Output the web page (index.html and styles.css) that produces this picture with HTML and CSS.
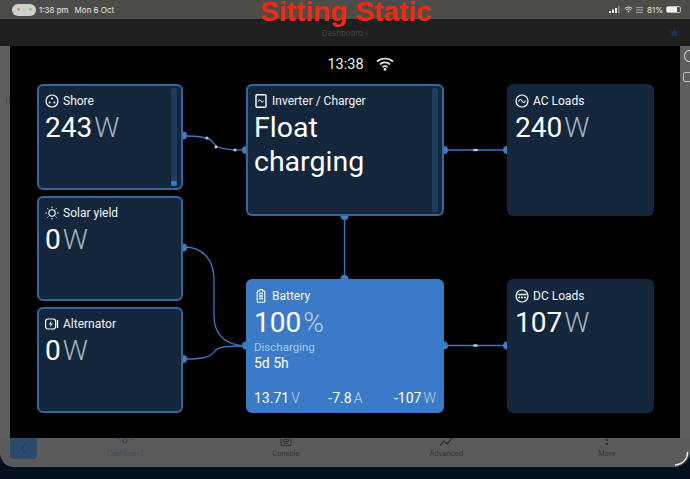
FILE: index.html
```html
<!DOCTYPE html>
<html lang="en">
<head>
<meta charset="utf-8">
<title>Dashboard</title>
<link rel="stylesheet" href="styles.css">
</head>
<body>
<div class="tablet">
  <header class="status">
    <div class="status-left">
      <span class="lights"><i class="l-red"></i><i class="l-yellow"></i><i class="l-green"></i></span>
      <span>1:38 pm</span><span class="date">Mon 6 Oct</span>
    </div>
    <div class="status-right">
      <svg class="st-signal" viewBox="0 0 11 7"><path d="M0 5h2v2H0zM3 3.500h2V7H3zM6 2h2v5H6z" fill="#e8e8e8"/><path d="M9 0h1.500v7H9z" fill="#8b8b88"/></svg>
      <svg class="st-wifi" viewBox="0 0 12 9"><path d="M1 3.200C4 .6 8 .6 11 3.200M2.800 5C4.800 3.400 7.200 3.400 9.200 5" fill="none" stroke="#e8e8e8" stroke-width="1.300"/><path d="M6 8.500 4.300 6.600C5.300 5.900 6.700 5.900 7.700 6.600z" fill="#e8e8e8"/></svg>
      <svg class="st-list" viewBox="0 0 9 7"><path d="M0 .5h9M0 3.500h9M0 6.500h9" stroke="#bdbdb9" stroke-width="1"/></svg>
      <span>81%</span>
      <span class="st-batt"><i></i></span>
    </div>
  </header>
  <nav class="crumb">
    <span class="crumb-text">Dashboard ›</span>
    <svg class="star" viewBox="0 0 24 24"><path d="M12 2l3 7 7.500.6-5.700 4.900 1.800 7.500L12 18l-6.600 4 1.800-7.500L1.500 9.600 9 9z" fill="#1b3553"/></svg>
  </nav>
  <div class="middle">
    <aside class="strip strip-left"><span class="strip-mark"></span></aside>
    <main class="panel">
      <svg class="wires" viewBox="10 46 670 392">
        <g fill="none" stroke="#3d78be" stroke-width="1.300">
          <path d="M184 136C197 136 208 137 212 141C216 148 222 150 245 150"/>
          <path d="M444 150H507"/>
          <path d="M344.500 216V279"/>
          <path d="M184 247C205 247 214 262 214 280V316C214 335 226 345 245 346"/>
          <path d="M184 359C200 359 210 358 214 352C218 346 230 346 245 346"/>
          <path d="M444 345.500H507"/>
        </g>
        <g fill="#3d7cc6">
          <circle cx="183" cy="135.500" r="4"/><circle cx="246" cy="150" r="4"/><circle cx="444" cy="150" r="4"/>
          <circle cx="507" cy="150" r="4"/><circle cx="344.500" cy="216" r="4"/><circle cx="344.500" cy="279" r="4"/>
          <circle cx="183" cy="247.500" r="4"/><circle cx="183" cy="359" r="4"/><circle cx="246" cy="345.500" r="4"/>
          <circle cx="444" cy="345.500" r="4"/><circle cx="507" cy="345.500" r="4"/>
        </g>
        <g fill="#c9ced4">
          <circle cx="207" cy="138" r="1.500"/><circle cx="216" cy="147" r="1.500"/><circle cx="235" cy="150" r="1.500"/>
          <ellipse cx="475.500" cy="150" rx="2.500" ry="1.300"/><ellipse cx="475.500" cy="345.500" rx="2.500" ry="1.300"/>
        </g>
      </svg>
      <div class="clock">
        <span>13:38</span>
        <svg class="clock-wifi" viewBox="0 0 18 14"><path d="M1 4.500C5.500.5 12.500.5 17 4.500M3.800 7.300C6.800 4.800 11.200 4.800 14.200 7.300M6.400 10C8 8.800 10 8.800 11.600 10" fill="none" stroke="#e6e6e6" stroke-width="1.700"/><circle cx="9" cy="12.400" r="1.400" fill="#e6e6e6"/></svg>
      </div>
      <div class="diagram">
        <div class="col col-left">
          <section class="card outlined">
            <div class="card-title"><svg class="ico" viewBox="0 0 14 14"><circle cx="7" cy="7" r="6" fill="none" stroke="#fff" stroke-width="1.200"/><circle cx="7" cy="4.500" r="1" fill="#fff"/><circle cx="4.600" cy="8.500" r="1" fill="#fff"/><circle cx="9.400" cy="8.500" r="1" fill="#fff"/></svg>Shore</div>
            <div class="value">243<span class="unit">W</span></div>
            <div class="scroll"><i class="thumb"></i></div>
          </section>
          <section class="card outlined">
            <div class="card-title"><svg class="ico" viewBox="0 0 14 14"><circle cx="7" cy="7" r="3.200" fill="none" stroke="#fff" stroke-width="1.100"/><path d="M7 .5v1.500M7 12v1.500M.5 7H2M12 7h1.500M2.400 2.400l1 1M10.600 10.600l1 1M2.400 11.600l1-1M10.600 3.400l1-1" stroke="#fff" stroke-width="1"/></svg>Solar yield</div>
            <div class="value">0<span class="unit">W</span></div>
          </section>
          <section class="card outlined">
            <div class="card-title"><svg class="ico" viewBox="0 0 14 14"><rect x=".6" y="2" width="10" height="10" rx="2.500" fill="none" stroke="#fff" stroke-width="1.200"/><path d="M6.500 3.500 3.800 7.500h2L5 10.500l2.800-4h-2z" fill="#fff"/><path d="M12.500 3v8" stroke="#fff" stroke-width="1.400"/></svg>Alternator</div>
            <div class="value">0<span class="unit">W</span></div>
          </section>
        </div>
        <div class="col col-mid">
          <section class="card outlined card-tall">
            <div class="card-title"><svg class="ico" viewBox="0 0 14 14"><rect x="2" y=".8" width="10" height="12.400" rx="1" fill="none" stroke="#fff" stroke-width="1.400"/><path d="M4.300 7.400C5.300 5.400 6.300 5.400 7 7S8.700 8.600 9.700 6.600" fill="none" stroke="#fff" stroke-width="1"/></svg>Inverter / Charger</div>
            <div class="value value-text">Float charging</div>
            <div class="scroll scroll-plain"></div>
          </section>
          <section class="card card-battery">
            <div class="card-title"><svg class="ico" viewBox="0 0 14 14"><path d="M5.500 .7h3v1.300h1.500c.5 0 .8.300.8.800v9.600c0 .5-.3.800-.8.800H4c-.5 0-.8-.3-.8-.8V2.800c0-.5.300-.8.800-.8h1.500z" fill="none" stroke="#fff" stroke-width="1.100"/><path d="M5 4.500h4M5 7h4M5 9.500h4" stroke="#fff" stroke-width="1.400"/></svg>Battery</div>
            <div class="value">100<span class="unit">%</span></div>
            <div class="batt-state">Discharging</div>
            <div class="batt-time">5d 5h</div>
            <div class="batt-row">
              <span>13.71<span class="unit">V</span></span>
              <span class="batt-amps">-7.8<span class="unit">A</span></span>
              <span>-107<span class="unit">W</span></span>
            </div>
          </section>
        </div>
        <div class="col col-right">
          <section class="card card-tall">
            <div class="card-title"><svg class="ico" viewBox="0 0 14 14"><circle cx="7" cy="7" r="6" fill="none" stroke="#fff" stroke-width="1.200"/><path d="M3.500 7.600C4.700 5 6 5 7 7s2.300 2 3.500-.6" fill="none" stroke="#fff" stroke-width="1.100"/></svg>AC Loads</div>
            <div class="value">240<span class="unit">W</span></div>
          </section>
          <section class="card card-low">
            <div class="card-title"><svg class="ico" viewBox="0 0 14 14"><circle cx="7" cy="7" r="6" fill="none" stroke="#fff" stroke-width="1.200"/><path d="M2.500 5.500h9" stroke="#fff" stroke-width="1.400"/><path d="M3 8.500h8" stroke="#fff" stroke-width="1.400" stroke-dasharray="2 1"/></svg>DC Loads</div>
            <div class="value">107<span class="unit">W</span></div>
          </section>
        </div>
      </div>
    </main>
    <aside class="strip strip-right"><span class="strip-x"></span><span class="strip-box"></span></aside>
  </div>
  <footer class="tabs">
    <span class="back"><svg viewBox="0 0 8 14"><path d="M6.500 1 1.500 7l5 6" fill="none" stroke="#1d3b5c" stroke-width="1.300"/></svg></span>
    <div class="tab-list">
      <div class="tab tab-on"><svg class="tab-ico" viewBox="0 0 14 9"><circle cx="7" cy="3" r="2" fill="none" stroke="#2d4661" stroke-width="1.200"/><path d="M1 0v2M13 0v2" stroke="#2d4661" stroke-width="1"/></svg><span>Dashboard</span></div>
      <div class="tab"><svg class="tab-ico" viewBox="0 0 14 9"><path d="M2 0v7.500h10V0M4.500 1.500h5v2h-5zM5 5.500h4" fill="none" stroke="#333" stroke-width="1"/></svg><span>Console</span></div>
      <div class="tab"><svg class="tab-ico" viewBox="0 0 14 9"><path d="M1 7.500 5 3l3 3 5-6" fill="none" stroke="#2e2e2e" stroke-width="1.200"/></svg><span>Advanced</span></div>
      <div class="tab"><svg class="tab-ico" viewBox="0 0 14 9"><circle cx="7" cy="2" r="1" fill="#222"/><circle cx="7" cy="6" r="1" fill="#222"/></svg><span>More</span></div>
    </div>
    <svg class="corner" viewBox="0 0 16 16"><path d="M14.500 1C14.500 8 10 13 2 14" fill="none" stroke="#f1f1f1" stroke-width="1.500"/></svg>
  </footer>
</div>
<div class="banner">Sitting Static</div>
</body>
</html>
```
FILE: styles.css
```css
* { box-sizing: border-box; }
html, body { margin: 0; height: 100%; }
body {
  width: 690px;
  height: 479px;
  overflow: hidden;
  position: relative;
  background: #04101e;
  font-family: Roboto, "Liberation Sans", sans-serif;
  color: #fff;
}
.tablet {
  height: 467px;
  display: flex;
  flex-direction: column;
  background: #5a5a5a;
  border-radius: 0 0 16px 14px;
  overflow: hidden;
}
.status {
  height: 19px;
  flex: none;
  background: #4e4c48;
  display: flex;
  justify-content: space-between;
  align-items: center;
  padding: 0 9px 0 12px;
  font: 8px "Inter", "Liberation Sans", sans-serif;
  color: #e6e6e4;
}
.status-left, .status-right { display: flex; align-items: center; }
.lights {
  width: 24px;
  height: 12px;
  border-radius: 6px;
  background: #cfcfcd;
  display: flex;
  justify-content: center;
  align-items: center;
  gap: 3px;
  margin-right: 3px;
}
.lights i { width: 3px; height: 3px; border-radius: 50%; }
.l-red { background: #d98a7a; }
.l-yellow { background: #d6c27a; }
.l-green { background: #86c27e; }
.date { margin-left: 6px; }
.st-signal { width: 11px; height: 7px; margin-right: 4px; }
.st-wifi { width: 9px; height: 7px; margin-right: 3px; }
.st-list { width: 7px; height: 6px; margin-right: 4px; }
.st-batt {
  width: 15px;
  height: 7px;
  margin-left: 3px;
  border: 1px solid #b9b9b5;
  border-radius: 2px;
  display: block;
}
.st-batt i { display: block; width: 80%; height: 100%; background: #f2f2f0; }
.crumb {
  height: 27px;
  flex: none;
  background: #1f1f1f;
  display: flex;
  justify-content: center;
  align-items: center;
  position: relative;
  font: 8px "Inter", "Liberation Sans", sans-serif;
  color: #444;
}
.star { position: absolute; right: 10px; top: 8px; width: 11px; height: 11px; }
.middle { height: 392px; flex: none; display: flex; }
.strip { width: 10px; flex: none; background: #5e5e5e; position: relative; }
.strip-mark { position: absolute; left: 6px; top: 51px; width: 4px; height: 7px; border-left: 1px solid #4c4c4c; border-right: 1px solid #4c4c4c; }
.strip-x { position: absolute; left: 4px; top: 4px; width: 10px; height: 12px; border: 1px solid #d8d8d8; border-radius: 50%; }
.strip-box { position: absolute; left: 3px; top: 26px; width: 10px; height: 10px; border: 1px solid #bdbdbd; border-radius: 2px; }
.panel { width: 670px; flex: none; background: #000; position: relative; }
.wires { position: absolute; left: 0; top: 0; width: 670px; height: 392px; }
.clock {
  height: 38px;
  display: flex;
  justify-content: center;
  align-items: center;
  gap: 12px;
  position: relative;
  font-size: 14.500px;
  padding: 0 0 2px 31px;
  color: #f2f2f2;
}
.clock-wifi { width: 18px; height: 14px; }
.diagram {
  position: relative;
  display: grid;
  grid-template-columns: 146px 198px 147px;
  column-gap: 63px;
  padding-left: 27px;
}
.col { display: flex; flex-direction: column; }
.col-left { gap: 6px; }
.col-left .card { height: 105.500px; }
.col-mid, .col-right { gap: 63px; }
.card {
  position: relative;
  background: #13263c;
  border-radius: 6px;
  padding: 10px 0 0 8px;
  height: 134px;
}
.card-tall { height: 132px; }
.outlined { border: 2px solid #35669d; padding: 8px 0 0 6px; }
.card-title {
  display: flex;
  align-items: center;
  gap: 4px;
  font-size: 12px;
  line-height: 14px;
  color: #f4f6f8;
}
.ico { width: 14px; height: 14px; flex: none; }
.value {
  font-size: 28px;
  font-weight: 400;
  line-height: 34px;
  margin-top: 3px;
  color: #fff;
}
.value-text { font-size: 28.500px; line-height: 34px; width: 120px; }
.unit { color: #a9b4c0; margin-left: 2px; font-weight: 300; }
.scroll {
  position: absolute;
  right: 4px;
  top: 2px;
  bottom: 2px;
  width: 6px;
  border-radius: 2px;
  background: #1d3c60;
}
.thumb { position: absolute; left: 0; right: 0; bottom: 0; height: 5px; border-radius: 2px; background: #3b78c4; }
.card-battery { background: #3a7ac6; }
.card-battery .unit { color: #b9d3f0; }
.batt-state { font-size: 11.500px; line-height: 15px; color: #a9ccf2; }
.batt-time { font-size: 14px; line-height: 17px; }
.batt-row {
  position: absolute;
  left: 8px;
  right: 8px;
  bottom: 7px;
  display: flex;
  justify-content: space-between;
  font-size: 14px;
  line-height: 16px;
}
.batt-amps { margin-right: 3px; }
.tabs { flex: 1; position: relative; display: flex; }
.back {
  width: 27px;
  height: 21px;
  margin-left: 10px;
  background: #2b4a6c;
  border-radius: 0 0 4px 4px;
  display: flex;
  justify-content: center;
  align-items: center;
}
.back svg { width: 7px; height: 11px; }
.tab-list { margin-left: 8px; width: 642px; display: grid; grid-template-columns: repeat(4, 1fr); }
.tab {
  display: flex;
  flex-direction: column;
  align-items: center;
  font: 7px "Inter", "Liberation Sans", sans-serif;
  color: #333;
}
.tab-on { color: #38506b; }
.tab-ico { width: 14px; height: 9px; margin-bottom: 2px; }
.corner { position: absolute; right: 1px; bottom: 0; width: 16px; height: 16px; }
.banner {
  position: absolute;
  left: 260px;
  top: 0;
  font: bold 28.100px "Liberation Sans", Arial, sans-serif;
  line-height: 24px;
  color: #ee2a10;
  white-space: nowrap;
}
```
